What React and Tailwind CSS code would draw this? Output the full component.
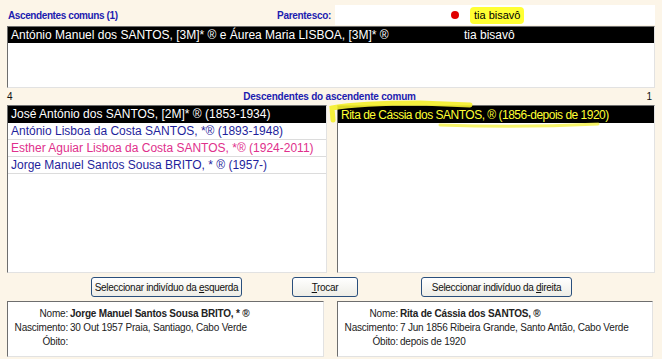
import React from 'react'

const font = "font-['Liberation_Sans',Arial,sans-serif]"

function Sunken({ className = '', children }) {
  return (
    <div className={`bg-white border border-t-[#6e6e6e] border-l-[#6e6e6e] border-r-[#e2e2e2] border-b-[#e2e2e2] ${className}`}>
      {children}
    </div>
  )
}

function Row({ children, selected, color = 'text-[#1f1f9c]' }) {
  return (
    <div
      className={`h-[17px] px-[3px] flex items-center text-[12px] whitespace-nowrap border-b ${
        selected ? 'bg-black text-white border-black' : `${color} border-[#dcdcdc]`
      }`}
    >
      {children}
    </div>
  )
}

function Btn({ children, className = '' }) {
  return (
    <button className={`h-[20px] rounded-[3px] border border-[#2a4f7c] bg-gradient-to-b from-white to-[#eeede6] text-[10px] tracking-[-0.3px] whitespace-nowrap text-[#111] ${className}`}>
      {children}
    </button>
  )
}

function Info({ nome, nasc, obito, className = '' }) {
  const rows = [
    ['Nome:', nome, true],
    ['Nascimento:', nasc],
    ['Óbito:', obito],
  ]
  return (
    <Sunken className={`h-[56px] pt-[4px] text-[10px] tracking-[-0.2px] text-[#222] ${className}`}>
      {rows.map(([k, v, b]) => (
        <div key={k} className="flex h-[14px] items-center whitespace-nowrap">
          <span className="w-[62px] text-right pr-[2px]">{k}</span>
          <span className={b ? 'font-bold' : ''}>{v}</span>
        </div>
      ))}
    </Sunken>
  )
}

export default function App() {
  return (
    <div className={`w-[662px] h-[359px] bg-[#fcf5e8] relative overflow-hidden ${font}`}>
      {/* header */}
      <div className="flex items-center h-[20px] mt-[5px]">
        <span className="ml-[8px] text-[10px] font-bold tracking-[-0.4px] text-[#1c1cb0]">Ascendentes comuns (1)</span>
        <span className="ml-auto mr-[4px] text-[10px] font-bold tracking-[-0.3px] text-[#1c1cb0]">Parentesco:</span>
        <div className="w-[320px] h-[20px] mr-[7px] bg-white flex items-center">
          <span className="ml-[116px] w-[8px] h-[8px] rounded-full bg-[#e00000]" />
          <span className="ml-[11px] px-[4px] h-[17px] flex items-center rounded-[4px] bg-[#ffff33] text-[11px] text-black">tia bisavô</span>
        </div>
      </div>

      <Sunken className="mx-[7px] mt-[1px] h-[62px]">
        <div className="h-[16px] bg-black text-white text-[12px] flex items-center px-[3px] whitespace-nowrap">
          <span className="w-[453px]">António Manuel dos SANTOS, [3M]* ® e Áurea Maria LISBOA, [3M]* ®</span>
          <span>tia bisavô</span>
        </div>
      </Sunken>

      <div className="flex items-center h-[17px] text-[10px] px-[7px]">
        <span className="text-[#111] w-[10px]">4</span>
        <span className="flex-1 text-center font-bold tracking-[-0.2px] text-[#1c1cb0]">Descendentes do ascendente comum</span>
        <span className="text-[#111] w-[10px] text-right mr-[3px]">1</span>
      </div>

      <div className="flex">
        <Sunken className="ml-[7px] w-[320px] h-[168px]">
          <Row selected>José António dos SANTOS, [2M]* ® (1853-1934)</Row>
          <Row>António Lisboa da Costa SANTOS, *® (1893-1948)</Row>
          <Row color="text-[#e0308c]">Esther Aguiar Lisboa da Costa SANTOS, *® (1924-2011)</Row>
          <Row>Jorge Manuel Santos Sousa BRITO, * ® (1957-)</Row>
        </Sunken>
        <Sunken className="ml-[10px] w-[318px] h-[168px]">
          <div className="h-[17px] px-[3px] flex items-center text-[12px] tracking-[-0.5px] bg-black text-[#ffff33] whitespace-nowrap">
            Rita de Cássia dos SANTOS, ® (1856-depois de 1920)
          </div>
        </Sunken>
      </div>

      <div className="flex items-center h-[26px] mt-[1px]">
        <Btn className="ml-[91px] w-[151px]">Seleccionar indivíduo da <span className="underline">e</span>squerda</Btn>
        <Btn className="ml-[50px] w-[66px]"><span className="underline">T</span>rocar</Btn>
        <Btn className="ml-[63px] w-[151px]">Seleccionar indivíduo da <span className="underline">d</span>ireita</Btn>
      </div>

      <div className="flex mt-[1px]">
        <Info
          className="ml-[7px] w-[317px]"
          nome="Jorge Manuel Santos Sousa BRITO, * ®"
          nasc="30 Out 1957 Praia, Santiago, Cabo Verde"
          obito=""
        />
        <Info
          className="ml-[13px] w-[316px]"
          nome="Rita de Cássia dos SANTOS, ®"
          nasc="7 Jun 1856 Ribeira Grande, Santo Antão, Cabo Verde"
          obito="depois de 1920"
        />
      </div>

      {/* highlighter stroke around selected descendant */}
      <svg className="absolute left-0 top-0 pointer-events-none" width="662" height="359">
        <path
          d="M333 120 L332 108 Q360 103 420 103 L470 105"
          fill="none"
          stroke="#f4f02a"
          strokeWidth="5"
          strokeLinecap="round"
          opacity="0.9"
        />
        <path
          d="M440 125 Q520 128 598 124"
          fill="none"
          stroke="#f4f02a"
          strokeWidth="3"
          strokeLinecap="round"
          opacity="0.7"
        />
      </svg>
    </div>
  )
}
